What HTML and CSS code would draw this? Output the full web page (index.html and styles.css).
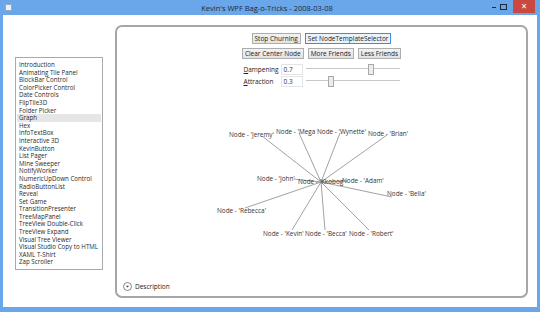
FILE: index.html
```html
<!DOCTYPE html>
<html lang="en">
<head>
  <meta charset="UTF-8" />
  <title>Kevin's WPF Bag-o-Tricks - 2008-03-08</title>
  <link rel="stylesheet" href="styles.css">
</head>
<body>
  <div class="window">
    <div class="titlebar">
      <span class="app-icon"></span>
      <span class="title">Kevin's WPF Bag-o-Tricks - 2008-03-08</span>
      <div class="caption">
        <span class="cap-btn min"></span>
        <span class="cap-btn max"></span>
        <span class="cap-btn close">×</span>
      </div>
    </div>

    <div class="client">
      <ul class="demos">
        <li>Introduction</li>
        <li>Animating Tile Panel</li>
        <li>BlockBar Control</li>
        <li>ColorPicker Control</li>
        <li>Date Controls</li>
        <li>FlipTile3D</li>
        <li>Folder Picker</li>
        <li class="selected">Graph</li>
        <li>Hex</li>
        <li>InfoTextBox</li>
        <li>Interactive 3D</li>
        <li>KevinButton</li>
        <li>List Pager</li>
        <li>Mine Sweeper</li>
        <li>NotifyWorker</li>
        <li>NumericUpDown Control</li>
        <li>RadioButtonList</li>
        <li>Reveal</li>
        <li>Set Game</li>
        <li>TransitionPresenter</li>
        <li>TreeMapPanel</li>
        <li>TreeView Double-Click</li>
        <li>TreeView Expand</li>
        <li>Visual Tree Viewer</li>
        <li>Visual Studio Copy to HTML</li>
        <li>XAML T-Shirt</li>
        <li>Zap Scroller</li>
      </ul>

      <div class="panel">
        <div class="controls">
          <div class="btn-row">
            <button class="btn">Stop Churning</button>
            <button class="btn focused">Set NodeTemplateSelector</button>
          </div>
          <div class="btn-row">
            <button class="btn">Clear Center Node</button>
            <button class="btn">More Friends</button>
            <button class="btn">Less Friends</button>
          </div>
          <div class="param">
            <label class="param-label"><u>D</u>ampening</label>
            <span class="value-box">0.7</span>
            <div class="slider"><span class="thumb" style="left: 67%"></span></div>
          </div>
          <div class="param">
            <label class="param-label"><u>A</u>ttraction</label>
            <span class="value-box">0.3</span>
            <div class="slider"><span class="thumb" style="left: 24%"></span></div>
          </div>
        </div>

        <svg class="graph" width="409" height="188" viewBox="115 90 409 188">
          <g class="edges">
            <line x1="319" y1="184" x2="260" y2="138" />
            <line x1="319" y1="184" x2="297" y2="135" />
            <line x1="319" y1="184" x2="338" y2="135" />
            <line x1="319" y1="184" x2="385" y2="137" />
            <line x1="319" y1="184" x2="292" y2="181" />
            <line x1="319" y1="184" x2="345" y2="183" />
            <line x1="319" y1="184" x2="390" y2="199" />
            <line x1="319" y1="184" x2="243" y2="210" />
            <line x1="319" y1="184" x2="290" y2="232" />
            <line x1="319" y1="184" x2="323" y2="232" />
            <line x1="319" y1="184" x2="367" y2="232" />
          </g>
          <g class="nodes">
            <text x="227" y="138.5">Node - 'Jeremy'</text>
            <text x="274" y="135.5">Node - 'Mega</text>
            <text x="315" y="135.5">Node - 'Wynette'</text>
            <text x="366" y="137.5">Node - 'Brian'</text>
            <text x="255" y="182.5">Node - 'John'</text>
            <text x="296" y="185.5">Node - 'Kkobog</text>
            <text x="340" y="184.5">Node - 'Adam'</text>
            <text x="385" y="197.5">Node - 'Bella'</text>
            <text x="215" y="214.5">Node - 'Rebecca'</text>
            <text x="261" y="237.5">Node - 'Kevin'</text>
            <text x="303" y="237.5">Node - 'Becca'</text>
            <text x="347" y="237.5">Node - 'Robert'</text>
          </g>
        </svg>

        <div class="expander">
          <span class="expander-btn">
            <svg width="9" height="9" viewBox="0 0 9 9"><circle cx="4.5" cy="4.5" r="4" /><path d="M3 3.8 L6 3.8 L4.5 5.6 Z" /></svg>
          </span>
          Description
        </div>
      </div>
    </div>
  </div>
</body>
</html>
```

FILE: styles.css
```css
body {
  margin: 0;
  padding: 0;
  font-family: 'Open Sans', 'Noto Sans', sans-serif;
  color: #222;
  background: #6aa6ea;
}
.window {
  width: 540px;
  height: 312px;
  display: flex;
  flex-direction: column;
  background: #6aa6ea;
}
.titlebar {
  height: 15px;
  position: relative;
  display: flex;
  align-items: center;
  justify-content: center;
  flex-shrink: 0;
}
.app-icon {
  position: absolute;
  left: 5px;
  top: 4px;
  width: 5px;
  height: 5px;
  background: #e8f0f8;
  border: 1px solid #9ab;
}
.title {
  font-size: 7.5px;
  color: #1e2a3a;
  margin-left: -6px;
}
.caption {
  position: absolute;
  right: 5px;
  top: 0;
  display: flex;
  align-items: flex-start;
}
.cap-btn {
  display: block;
  width: 9px;
  height: 13px;
  position: relative;
}
.min::after {
  content: '';
  position: absolute;
  left: 2px;
  top: 7px;
  width: 4px;
  height: 1px;
  background: #1e2a3a;
}
.max::after {
  content: '';
  position: absolute;
  left: 1px;
  top: 4px;
  width: 5px;
  height: 4px;
  border: 1px solid #1e2a3a;
}
.close {
  width: 22px;
  margin-left: 5px;
  background: #c9483f;
  color: #fff;
  font-size: 10px;
  line-height: 13px;
  text-align: center;
}
.client {
  flex: 1;
  display: flex;
  align-items: flex-start;
  background: #fff;
  margin: 0 3px 5px 3px;
}
.demos {
  list-style: none;
  margin: 42px 0 0 12px;
  padding: 3px 1px;
  width: 84px;
  height: 205px;
  border: 1px solid #a5a9b0;
  font-size: 6.2px;
  flex-shrink: 0;
}
.demos li {
  height: 7.6px;
  line-height: 7.6px;
  padding-left: 2px;
  white-space: nowrap;
  color: #2a2a2a;
}
.demos li.selected {
  background: #e6e6e6;
}
.panel {
  flex: 1;
  margin: 10px 11px 0 12px;
  height: 269px;
  border: 2px solid #a6a6a6;
  border-radius: 7px;
  display: flex;
  flex-direction: column;
}
.controls {
  display: flex;
  flex-direction: column;
  align-items: center;
  padding-top: 6px;
  height: 61px;
  box-sizing: border-box;
}
.btn-row {
  display: flex;
  gap: 4px;
  margin-bottom: 4px;
}
.btn {
  font-family: inherit;
  font-size: 6.5px;
  height: 11px;
  padding: 0 2px;
  line-height: 9px;
  color: #222;
  background: linear-gradient(#f2f2f2, #e3e3e3);
  border: 1px solid #adadad;
  border-radius: 0;
}
.btn.focused {
  background: #eaf3fc;
  border-color: #3c8fe0;
}
.param {
  display: flex;
  align-items: center;
  width: 156px;
  height: 12px;
  font-size: 6.5px;
}
.param-label {
  width: 37px;
}
.value-box {
  width: 18px;
  height: 9px;
  line-height: 9px;
  padding-left: 2px;
  border: 1px solid #e4e4e4;
  color: #333;
}
.slider {
  flex: 1;
  position: relative;
  height: 10px;
  margin-left: 3px;
}
.slider::before {
  content: '';
  position: absolute;
  left: 0;
  right: 0;
  top: 4px;
  height: 1px;
  background: #c8c8c8;
}
.thumb {
  position: absolute;
  top: 0;
  width: 4px;
  height: 9px;
  background: #ececec;
  border: 1px solid #a8a8a8;
}
.graph {
  display: block;
  flex-shrink: 0;
}
.edges line {
  stroke: #8a8a8a;
  stroke-width: 0.8;
}
.nodes text {
  font-family: 'Open Sans', 'Noto Sans', sans-serif;
  font-size: 6.4px;
  fill: #333;
}
.expander {
  display: flex;
  align-items: center;
  gap: 3px;
  font-size: 6.5px;
  padding-left: 6px;
  margin-top: 6px;
}
.expander-btn svg {
  display: block;
}
.expander-btn circle {
  fill: #fff;
  stroke: #666;
  stroke-width: 0.8;
}
.expander-btn path {
  fill: #333;
}
```
